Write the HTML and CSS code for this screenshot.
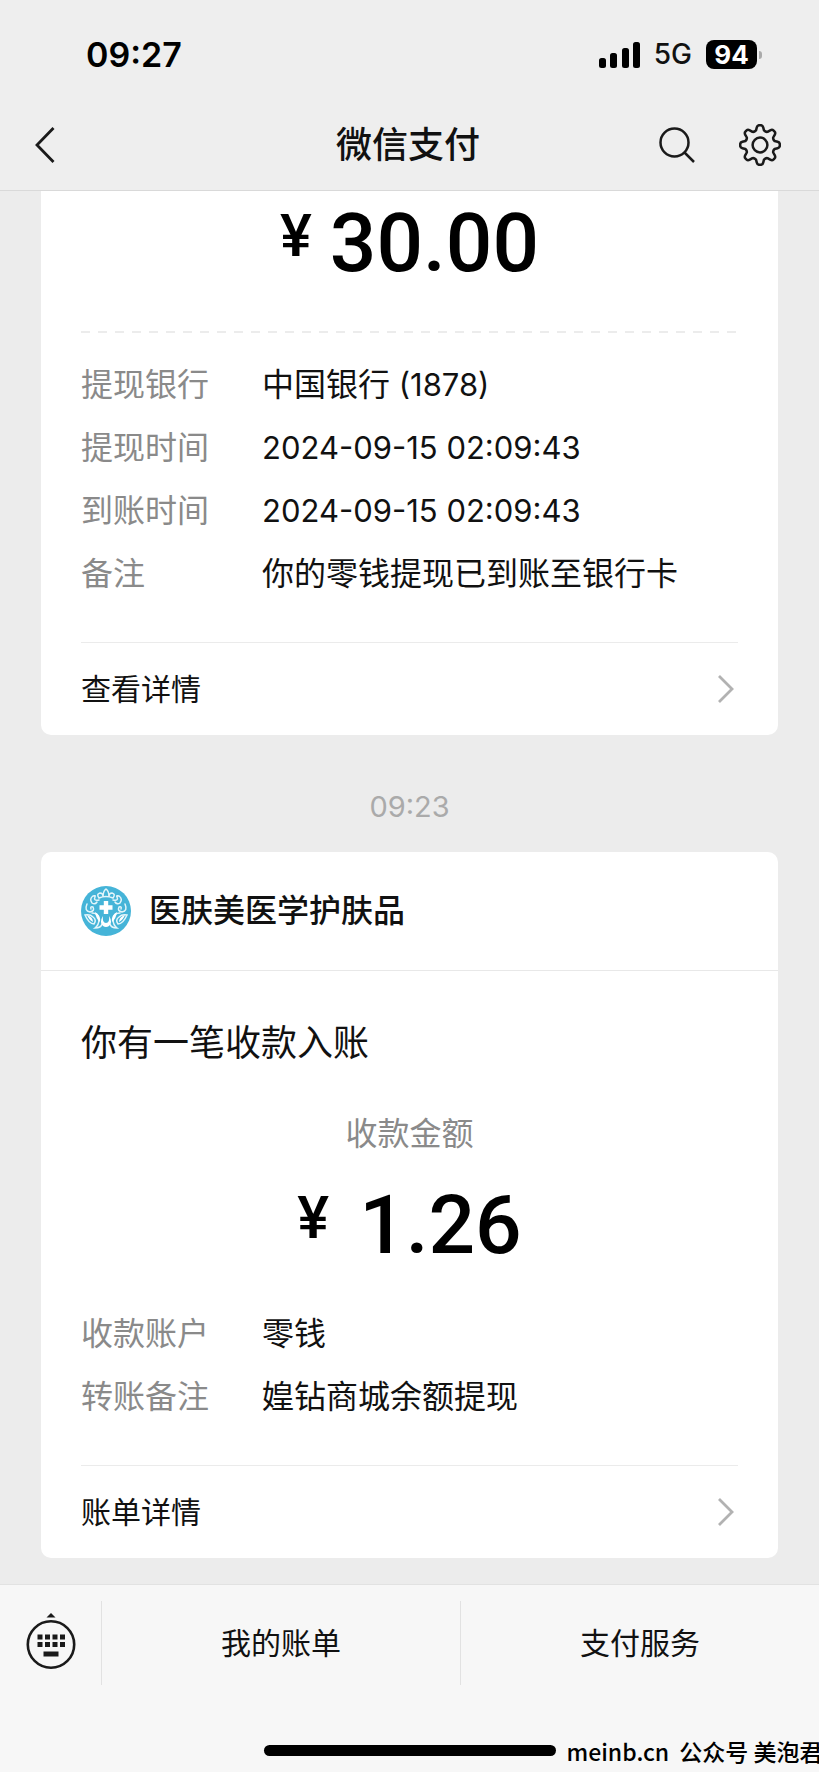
FILE: index.html
```html
<!DOCTYPE html>
<html lang="zh-CN">
<head>
  <meta charset="UTF-8">
  <meta name="viewport" content="width=device-width, initial-scale=1.0">
  <title>微信支付</title>
  <link rel="stylesheet" href="styles.css">
</head>
<body>
  <header class="header">
    <div class="status-bar">
      <span class="clock">09:27</span>
      <div class="status-right">
        <svg class="signal" width="41" height="26" viewBox="0 0 41 26">
          <rect x="0" y="16" width="7" height="10" rx="2.5"/>
          <rect x="11" y="11" width="7" height="15" rx="2.5"/>
          <rect x="23" y="6" width="7" height="20" rx="2.5"/>
          <rect x="34" y="0" width="7" height="26" rx="2.5"/>
        </svg>
        <span class="network">5G</span>
        <span class="battery">94</span>
      </div>
    </div>
    <nav class="nav">
      <button class="icon-btn" aria-label="返回">
        <svg width="20" height="36" viewBox="0 0 20 36" fill="none" stroke="#1a1a1a" stroke-width="2.8">
          <path d="M18.500 1 L2 18 L18.500 35"/>
        </svg>
      </button>
      <h1 class="title">微信支付</h1>
      <div class="nav-right">
        <button class="icon-btn" aria-label="搜索">
          <svg width="36" height="36" viewBox="0 0 36 36" fill="none" stroke="#1a1a1a" stroke-width="2.5">
            <circle cx="15.5" cy="15.5" r="14"/>
            <path d="M25.5 25.5 L35 35"/>
          </svg>
        </button>
        <button class="icon-btn" aria-label="设置">
          <svg width="42" height="42" viewBox="-21 -21 42 42" fill="none" stroke="#1a1a1a" stroke-width="2.5" stroke-linejoin="round">
            <path d="M-4 -14.6 L-3.2 -17.6 Q-2.6 -19.8 -.8 -19.8 H.8 Q2.6 -19.8 3.2 -17.6 L4 -14.6 Q5.8 -12.8 7.5 -13.2 L10.2 -14.7 Q12.2 -15.8 13.4 -14.6 L14.6 -13.4 Q15.8 -12.2 14.7 -10.2 L13.2 -7.5 Q12.8 -5.8 14.6 -4 L17.6 -3.2 Q19.8 -2.6 19.8 -.8 V.8 Q19.8 2.6 17.6 3.2 L14.6 4 Q12.8 5.8 13.2 7.5 L14.7 10.2 Q15.8 12.2 14.6 13.4 L13.4 14.6 Q12.2 15.8 10.2 14.7 L7.5 13.2 Q5.8 12.8 4 14.6 L3.2 17.6 Q2.6 19.8 .8 19.8 H-.8 Q-2.6 19.8 -3.2 17.6 L-4 14.6 Q-5.8 12.8 -7.5 13.2 L-10.2 14.7 Q-12.2 15.8 -13.4 14.6 L-14.6 13.4 Q-15.8 12.2 -14.7 10.2 L-13.2 7.5 Q-12.8 5.8 -14.6 4 L-17.6 3.2 Q-19.8 2.6 -19.8 .8 V-.8 Q-19.8 -2.6 -17.6 -3.2 L-14.6 -4 Q-12.8 -5.8 -13.2 -7.5 L-14.7 -10.2 Q-15.8 -12.2 -14.6 -13.4 L-13.4 -14.6 Q-12.2 -15.8 -10.2 -14.7 L-7.5 -13.2 Q-5.8 -12.8 -4 -14.6 Z"/>
            <circle r="7.4"/>
          </svg>
        </button>
      </div>
    </nav>
  </header>

  <main class="chat">
    <section class="card card-cut">
      <div class="amount"><span class="yen">¥</span><span class="number">30.00</span></div>
      <svg class="dashes" width="100%" height="2"><line x1="0" y1="1" x2="100%" y2="1" stroke="#ececec" stroke-width="2" stroke-dasharray="9 8"/></svg>
      <dl class="details">
        <div class="row"><dt>提现银行</dt><dd>中国银行<span class="digits"> (1878)</span></dd></div>
        <div class="row"><dt>提现时间</dt><dd class="digits">2024-09-15 02:09:43</dd></div>
        <div class="row"><dt>到账时间</dt><dd class="digits">2024-09-15 02:09:43</dd></div>
        <div class="row"><dt>备注</dt><dd>你的零钱提现已到账至银行卡</dd></div>
      </dl>
      <a class="more" href="#">查看详情
        <svg width="18" height="28" viewBox="0 0 18 28" fill="none" stroke="#b2b2b2" stroke-width="2.8"><path d="M2 1 L15 14 L2 27"/></svg>
      </a>
    </section>

    <time class="time">09:23</time>

    <section class="card">
      <div class="sender">
        <svg class="avatar" width="50" height="50" viewBox="0 0 50 50">
          <circle cx="25" cy="25" r="25" fill="#45b4d8"/>
          <!-- cross -->
          <path d="M22.8 15 H27.2 V19.3 H31.5 V23.7 H27.2 V28 H22.8 V23.7 H18.5 V19.3 H22.8 Z" fill="#fff"/>
          <!-- crown and side leaves -->
          <g fill="none" stroke="#e4f5fa" stroke-width="1.5" stroke-linecap="round">
            <path d="M18 12 Q15 8 19 7 Q22 7 22 11 Q22 5 25 3 Q28 5 28 11 Q28 7 31 7 Q35 8 32 12 Q25 9 18 12 Z"/>
            <path d="M18 14 Q12 15 14 11 Q15 9 12 10 Q8 13 11 17 Q14 19 16 16"/>
            <path d="M32 14 Q38 15 36 11 Q35 9 38 10 Q42 13 39 17 Q36 19 34 16"/>
            <path d="M6 18 Q3 25 9 26 Q14 25 12 21 Q9 20 10 23"/>
            <path d="M44 18 Q47 25 41 26 Q36 25 38 21 Q41 20 40 23"/>
            <path d="M4 29 Q8 38 13 38 Q16 34 12 31 Q9 28 4 29 Z"/>
            <path d="M46 29 Q42 38 37 38 Q34 34 38 31 Q41 28 46 29 Z"/>
            <path d="M11 27 Q17 27 18 33 Q18 39 14 42 Q20 42 21 38"/>
            <path d="M39 27 Q33 27 32 33 Q32 39 36 42 Q30 42 29 38"/>
          </g>
          <path d="M22 30 Q18 36 22 40 Q25 42 28 40 Q32 36 28 30 Q29 37 25 37 Q21 37 22 30 Z" fill="#fff"/>
          <path d="M14 26 Q20 29 19 36 Q15 33 14 26 Z M36 26 Q30 29 31 36 Q35 33 36 26 Z M6 29 Q12 31 12 36 Q8 34 6 29 Z M44 29 Q38 31 38 36 Q42 34 44 29 Z" fill="#fff"/>
        </svg>
        <span class="sender-name">医肤美医学护肤品</span>
      </div>
      <p class="message">你有一笔收款入账</p>
      <p class="caption">收款金额</p>
      <div class="amount amount-wide"><span class="yen">¥</span><span class="number">1.26</span></div>
      <dl class="details">
        <div class="row"><dt>收款账户</dt><dd>零钱</dd></div>
        <div class="row"><dt>转账备注</dt><dd>媓钻商城余额提现</dd></div>
      </dl>
      <a class="more" href="#">账单详情
        <svg width="18" height="28" viewBox="0 0 18 28" fill="none" stroke="#b2b2b2" stroke-width="2.8"><path d="M2 1 L15 14 L2 27"/></svg>
      </a>
    </section>
  </main>

  <footer class="footer">
    <div class="menu">
      <button class="keyboard" aria-label="键盘">
        <svg width="50" height="62" viewBox="0 0 50 62">
          <path d="M25 1 L29.5 5.5 H20.5 Z" fill="#1a1a1a"/>
          <circle cx="25" cy="32.5" r="23.2" fill="none" stroke="#1a1a1a" stroke-width="2.6"/>
          <path d="M11.500 22.500h5v5h-5z M19 22.500h5v5h-5z M26.500 22.500h5v5h-5z M34 22.500h5v5h-5z M11.500 30h5v5h-5z M19 30h5v5h-5z M26.500 30h5v5h-5z M34 30h5v5h-5z M17.500 39.500h15v5h-15z" fill="#1a1a1a"/>
        </svg>
      </button>
      <button class="menu-item">我的账单</button>
      <button class="menu-item">支付服务</button>
    </div>
    <div class="home">
      <span class="home-bar"></span>
      <span class="watermark"><span>meinb.cn</span><span>公众号 美泡君</span></span>
    </div>
  </footer>
</body>
</html>
```
FILE: styles.css
```css
* {
  box-sizing: border-box;
}

body {
  margin: 0;
  min-height: 100vh;
  display: flex;
  flex-direction: column;
  background: #ececec;
  color: #111;
  font-family: Inter, "Noto Sans CJK SC", sans-serif;
  font-size: 32px;
  line-height: 1.4;
  overflow-x: hidden;
}

h1, p, dl, dd {
  margin: 0;
}

button {
  padding: 0;
  border: none;
  background: none;
  color: inherit;
  font: inherit;
  cursor: pointer;
}

svg {
  display: block;
}

/* top */
.header {
  background: #eee;
  border-bottom: 1px solid #d9d9d9;
}

.status-bar {
  display: flex;
  justify-content: space-between;
  align-items: center;
  height: 100px;
  padding: 9px 62px 0 86px;
}

.clock {
  color: #000;
  font-size: 34px;
  font-weight: 600;
}

.status-right {
  display: flex;
  align-items: center;
  gap: 14px;
}

.network {
  font-size: 28px;
  font-weight: 500;
}

.battery {
  width: 51px;
  height: 29px;
  border-radius: 8px;
  background: #000;
  color: #fff;
  font-size: 26px;
  font-weight: 700;
  line-height: 29px;
  text-align: center;
}

.battery::after {
  content: "";
  position: absolute;
  width: 3px;
  height: 8px;
  margin: 11px 0 0 10px;
  border-radius: 0 3px 3px 0;
  background: #aaa;
}

.nav {
  display: grid;
  grid-template-columns: 1fr auto 1fr;
  align-items: center;
  height: 90px;
  padding: 0 38px 0 35px;
}

.title {
  font-size: 36px;
  font-weight: 500;
}

.nav-right {
  display: flex;
  justify-content: flex-end;
  align-items: center;
  gap: 44px;
}

/* cards */
.chat {
  flex: 1;
  padding: 0 41px 26px;
}

.card {
  padding: 0 40px;
  border-radius: 10px;
  background: #fff;
}

.card-cut {
  padding-top: 10px;
  border-radius: 0 0 10px 10px;
}

.amount {
  display: flex;
  justify-content: center;
  gap: 18px;
  color: #000;
  font-family: Roboto, sans-serif;
  font-weight: 500;
  line-height: 84px;
}

.amount-wide {
  gap: 30px;
}

.yen {
  font-size: 60px;
  line-height: 70px;
}

.number {
  font-size: 82px;
}

.dashes {
  margin-top: 46px;
}

.details {
  padding: 20px 0 37px;
}

.row {
  display: flex;
  line-height: 63px;
}

.row dt {
  width: 181px;
  color: #8a8a8a;
}

.digits {
  font-size: 31px;
}

.more {
  display: flex;
  justify-content: space-between;
  align-items: center;
  height: 93px;
  padding-right: 3px;
  border-top: 1px solid #ebebeb;
  color: #111;
  font-size: 30px;
  text-decoration: none;
}

.time {
  display: block;
  padding: 52px 0 26px;
  color: #aaa;
  font-size: 29px;
  line-height: 39px;
  text-align: center;
}

.sender {
  display: flex;
  align-items: center;
  gap: 18px;
  height: 119px;
  margin: 0 -40px;
  padding: 0 40px;
  border-bottom: 1px solid #e8e8e8;
}

.sender-name {
  font-weight: 500;
}

.message {
  padding-top: 48px;
  font-size: 36px;
  line-height: 48px;
}

.caption {
  padding: 43px 0 25px;
  color: #8a8a8a;
  line-height: 48px;
  text-align: center;
}

.card .amount-wide + .details {
  padding-top: 35px;
}

/* bottom */
.footer {
  background: #f7f7f7;
  border-top: 1px solid #e2e2e2;
}

.menu {
  display: flex;
  height: 116px;
  padding: 16px 0;
}

.keyboard {
  display: flex;
  justify-content: center;
  align-items: center;
  width: 101px;
}

.menu-item {
  flex: 1;
  border-left: 1px solid #e2e2e2;
  font-size: 30px;
}

.home {
  display: grid;
  grid-template-columns: 1fr 292px 1fr;
  align-items: center;
  padding-top: 28px;
  height: 71px;
}

.home-bar {
  grid-column: 2;
  height: 11px;
  border-radius: 6px;
  background: #000;
}

.watermark {
  display: flex;
  gap: 10px;
  width: 0;
  padding-left: 11px;
  color: #000;
  font-family: "Noto Sans CJK SC", sans-serif;
  font-size: 23px;
  font-weight: 500;
  line-height: 32px;
  white-space: nowrap;
}
```
